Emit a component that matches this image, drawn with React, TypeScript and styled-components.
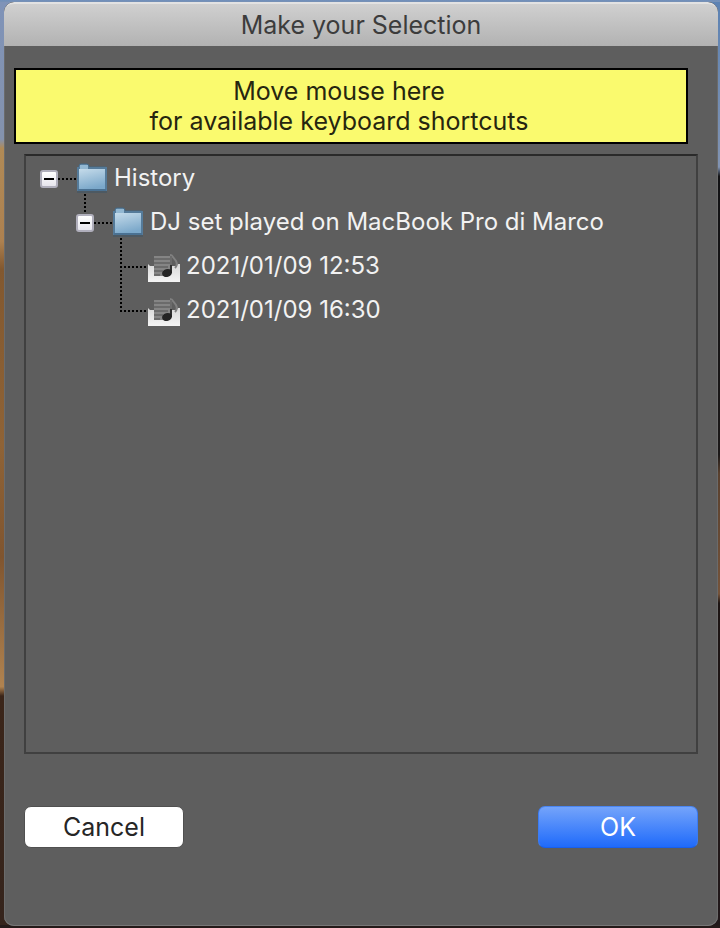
import React, { useState } from "react";
import styled, { createGlobalStyle, css } from "styled-components";

const GlobalStyle = createGlobalStyle`
  *, *::before, *::after { box-sizing: border-box; }
  body {
    margin: 0;
    font-family: Inter, "Liberation Sans", sans-serif;
    font-size: 25px;
    line-height: 30px;
  }
  button { font: inherit; }
`;

const Desktop = styled.main`
  display: flex;
  min-height: 100vh;
  padding: 2px 2px 2px 4px;
  background:
    linear-gradient(#6f8fbb, #7891b4) top / 100% 2px no-repeat,
    linear-gradient(#241a19, #241a19) bottom / 100% 3px no-repeat,
    linear-gradient(#7f93b8 0%, #8492ad 15%, #b08a56 16%, #ad8150 26%, #82582f 29%, #8f6336 48%, #80552f 60%, #b08350 74%, #3b2519 75%, #35241c 100%)
      left / 50% 100% no-repeat,
    linear-gradient(#5c82b3 0%, #8193b2 18%, #121214 19%, #1b1818 49%, #59402e 51%, #75533a 64%, #1c1413 65%, #21181a 100%)
      right / 50% 100% no-repeat;
`;

const Dialog = styled.section`
  display: flex;
  flex: 1;
  flex-direction: column;
  min-width: 0;
  overflow: hidden;
  border-radius: 10px;
  background: #5e5e5e;
  box-shadow: inset 0 -1px #777777, inset 1px 0 #6b6b6b, inset -1px 0 #6b6b6b;
`;

const TitleBar = styled.header`
  height: 44px;
  border-top: 2px solid #e2e2e2;
  border-radius: 10px 10px 0 0;
  background: linear-gradient(#d0d0d0, #b2b2b2);
`;

const Title = styled.h1`
  margin: 0;
  padding-top: 6px;
  color: #3c3c3c;
  font-size: 25px;
  font-weight: 400;
  line-height: 30px;
  text-align: center;
`;

const Hint = styled.p`
  margin: 22px 30px 0 10px;
  padding: 6px 24px 6px 0;
  border: 2px solid #000000;
  background: #fafa6e;
  color: #26260f;
  text-align: center;
`;

const TreePanel = styled.div`
  flex: 1;
  margin: 10px 20px 0;
  padding-left: 14px;
  border: 2px solid #404040;
  border-top-color: #2a2a2a;
  font-size: 24px;
`;

const Branch = styled.ul<{ $nested?: boolean }>`
  margin: 0;
  padding: 0 0 0 ${(p) => (p.$nested ? 36 : 0)}px;
  list-style: none;
`;

const Row = styled.div<{ $line?: "first" | "next"; $leaf?: boolean }>`
  position: relative;
  display: flex;
  align-items: center;
  height: 44px;
  padding-left: ${(p) => (p.$leaf ? 8 : 0)}px;
  ${(p) =>
    p.$line &&
    css`
      &::before {
        content: "";
        position: absolute;
        left: 8px;
        top: ${p.$line === "first" ? -6 : -22}px;
        bottom: ${p.$leaf ? 20 : 30}px;
        width: 2px;
        background: repeating-linear-gradient(#000000 0 2px, transparent 2px 4px);
      }
    `}
`;

const Toggle = styled.button`
  display: grid;
  place-items: center;
  width: 18px;
  height: 18px;
  margin-top: 2px;
  padding: 0;
  border: 2px solid #b0afbc;
  border-radius: 3px;
  background: linear-gradient(#ffffff, #e6e5ed);
  color: #000000;
`;

const Connector = styled.span<{ $leaf?: boolean }>`
  width: ${(p) => (p.$leaf ? 28 : 18)}px;
  height: 2px;
  margin-top: 2px;
  background: repeating-linear-gradient(90deg, #000000 0 2px, transparent 2px 4px);
`;

const Label = styled.span`
  margin-left: 6px;
  color: #f2f2f2;
  white-space: nowrap;
`;

const Actions = styled.footer`
  display: flex;
  align-items: center;
  justify-content: space-between;
  padding: 52px 20px 78px;
`;

const Button = styled.button<{ $primary?: boolean }>`
  width: 160px;
  height: 42px;
  padding: 0;
  border: 1px solid #505050;
  border-radius: 7px;
  background: #ffffff;
  color: #262626;
  ${(p) =>
    p.$primary &&
    css`
      border-color: #4a86f2 #3b7cf3 #1860ef;
      background: linear-gradient(#76a5fa, #1d69fb) border-box;
      color: #ffffff;
    `}
`;

const FolderIcon = () => (
  <svg width="32" height="32" viewBox="0 0 32 32" aria-hidden="true">
    <defs>
      <linearGradient id="folder" x1="0" y1="0" x2="0.3" y2="1">
        <stop offset="0" stopColor="#c9deec" />
        <stop offset="1" stopColor="#7ba8ca" />
      </linearGradient>
    </defs>
    <path d="M1 30h30" stroke="#4d5962" strokeWidth="2" />
    <path d="M3 8V4q0-2 2-2h6q2 0 2 3h17v4H3z" fill="#7199b8" stroke="#426683" strokeWidth="1" />
    <path d="M2 6h28v22H2z" fill="url(#folder)" stroke="#557b9a" strokeWidth="2" />
    <path d="M4 3h8v4H4z" fill="#93b8d2" />
    <path d="M2 28h28" stroke="#41698a" strokeWidth="1" />
  </svg>
);

const PlaylistIcon = () => (
  <svg width="32" height="32" viewBox="0 -2 32 32" aria-hidden="true">
    <defs>
      <linearGradient id="paper" x1="0" y1="0" x2="0" y2="1">
        <stop offset="0" stopColor="#d9d9d9" />
        <stop offset="1" stopColor="#f4f4f4" />
      </linearGradient>
    </defs>
    <path d="M0 12l2 2h26l2-2h2v18H0z" fill="url(#paper)" />
    <path d="M6 4h17v14l-8 6H6z" fill="#858585" />
    <path d="M6 7h16M6 11h16M6 15h14M6 19h9M6 23h6" stroke="#6b6b6b" strokeWidth="2" />
    <path d="M22 3q2 0 3 2l3 4q2 4-1 7" fill="none" stroke="#808080" strokeWidth="2" />
    <path d="M23 4v10" stroke="#6b6b6b" strokeWidth="2" />
    <path d="M23 13v8" stroke="#303030" strokeWidth="2" />
    <ellipse cx="19" cy="21" rx="5" ry="4" fill="#242424" transform="rotate(-15 19 21)" />
  </svg>
);

type TreeNode = { label: string; children?: TreeNode[] };

const history: TreeNode = {
  label: "History",
  children: [
    {
      label: "DJ set played on MacBook Pro di Marco",
      children: [{ label: "2021/01/09 12:53" }, { label: "2021/01/09 16:30" }],
    },
  ],
};

function TreeItem({ node, line }: { node: TreeNode; line?: "first" | "next" }) {
  const [open, setOpen] = useState(true);
  const leaf = !node.children;
  return (
    <li>
      <Row $line={line} $leaf={leaf}>
        {!leaf && (
          <Toggle
            type="button"
            aria-expanded={open}
            aria-label={`${open ? "Collapse" : "Expand"} ${node.label}`}
            onClick={() => setOpen(!open)}
          >
            <svg width="10" height="10" viewBox="0 0 10 10" aria-hidden="true">
              <path d={open ? "M0 5h10" : "M0 5h10M5 0v10"} stroke="currentColor" strokeWidth="2" />
            </svg>
          </Toggle>
        )}
        <Connector $leaf={leaf} />
        {leaf ? <PlaylistIcon /> : <FolderIcon />}
        <Label>{node.label}</Label>
      </Row>
      {open && node.children && (
        <Branch $nested>
          {node.children.map((child, i) => (
            <TreeItem key={child.label} node={child} line={i === 0 ? "first" : "next"} />
          ))}
        </Branch>
      )}
    </li>
  );
}

export default function App() {
  return (
    <>
      <GlobalStyle />
      <Desktop>
        <Dialog role="dialog" aria-labelledby="dialog-title">
          <TitleBar>
            <Title id="dialog-title">Make your Selection</Title>
          </TitleBar>
          <Hint>
            Move mouse here
            <br />
            for available keyboard shortcuts
          </Hint>
          <TreePanel>
            <Branch>
              <TreeItem node={history} />
            </Branch>
          </TreePanel>
          <Actions>
            <Button type="button">Cancel</Button>
            <Button type="button" $primary>
              OK
            </Button>
          </Actions>
        </Dialog>
      </Desktop>
    </>
  );
}
